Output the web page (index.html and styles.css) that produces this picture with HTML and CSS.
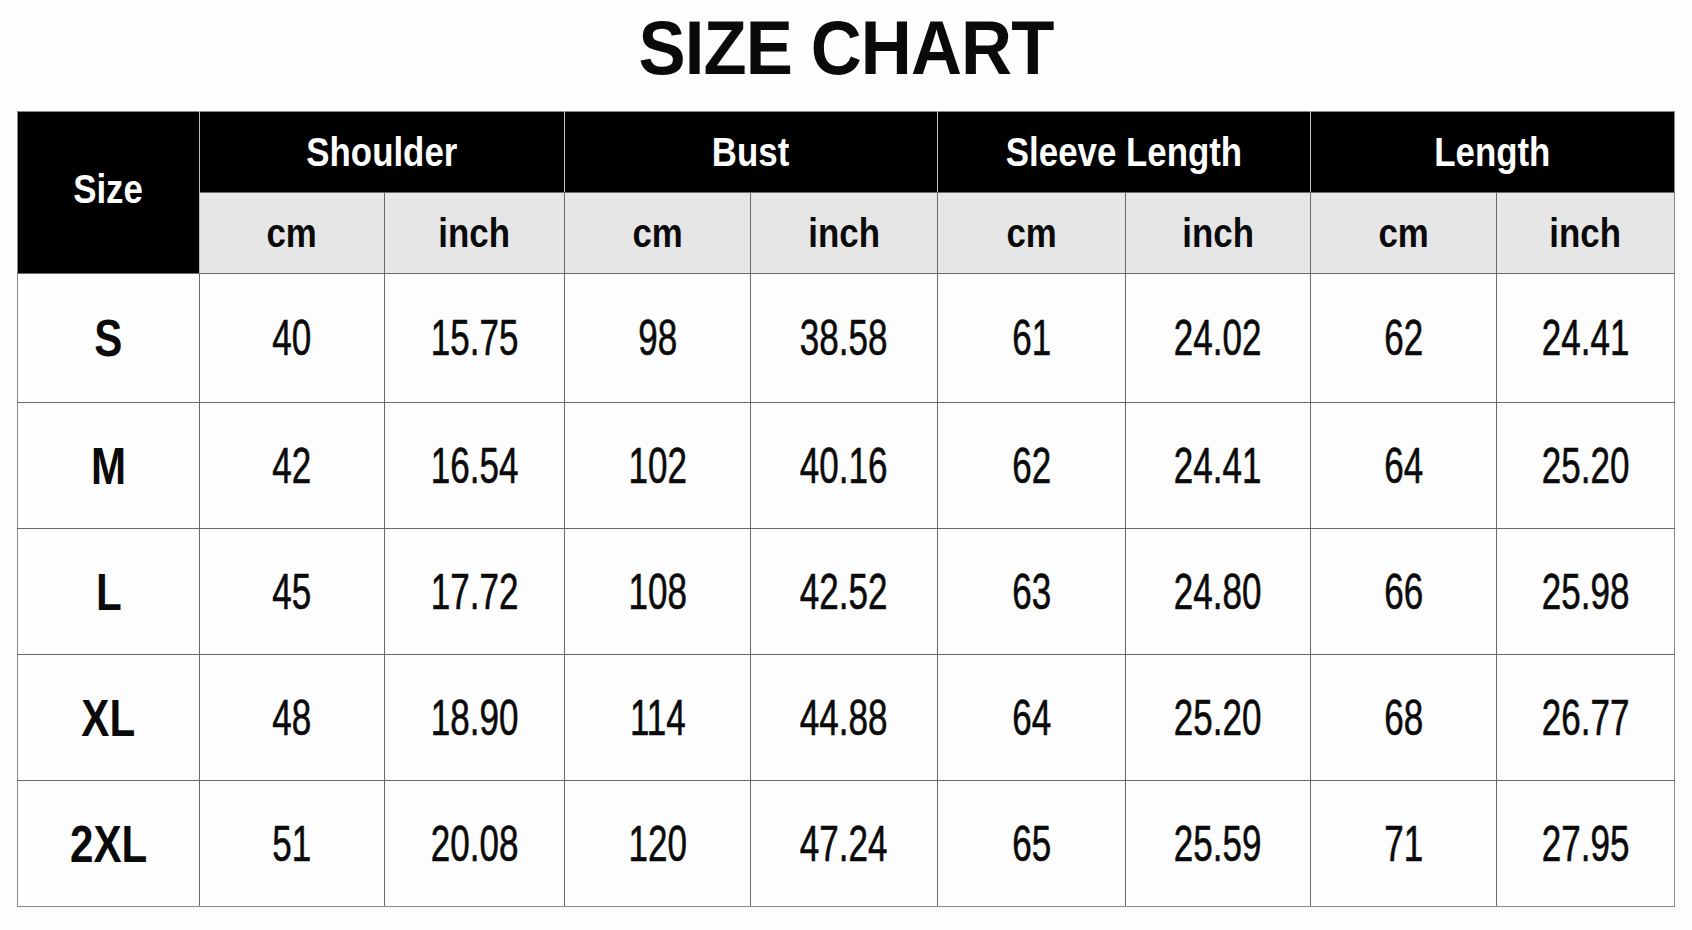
FILE: index.html
```html
<!DOCTYPE html>
<html lang="en">
<head>
<meta charset="utf-8">
<title>Size Chart</title>
<link rel="stylesheet" href="styles.css">
</head>
<body>
<div class="page">
  <h1 class="title"><span>SIZE CHART</span></h1>
  <table class="chart">
    <colgroup>
      <col class="c1"><col class="c2"><col class="c3"><col class="c4"><col class="c5">
      <col class="c6"><col class="c7"><col class="c8"><col class="c9">
    </colgroup>
    <thead>
      <tr class="h1">
        <th rowspan="2" class="size-h"><span>Size</span></th>
        <th colspan="2"><span>Shoulder</span></th>
        <th colspan="2"><span>Bust</span></th>
        <th colspan="2"><span>Sleeve Length</span></th>
        <th colspan="2"><span>Length</span></th>
      </tr>
      <tr class="h2">
        <th><span>cm</span></th><th><span>inch</span></th>
        <th><span>cm</span></th><th><span>inch</span></th>
        <th><span>cm</span></th><th><span>inch</span></th>
        <th><span>cm</span></th><th><span>inch</span></th>
      </tr>
    </thead>
    <tbody>
      <tr class="first"><th><span>S</span></th><td><span>40</span></td><td><span>15.75</span></td><td><span>98</span></td><td><span>38.58</span></td><td><span>61</span></td><td><span>24.02</span></td><td><span>62</span></td><td><span>24.41</span></td></tr>
      <tr><th><span>M</span></th><td><span>42</span></td><td><span>16.54</span></td><td><span>102</span></td><td><span>40.16</span></td><td><span>62</span></td><td><span>24.41</span></td><td><span>64</span></td><td><span>25.20</span></td></tr>
      <tr><th><span>L</span></th><td><span>45</span></td><td><span>17.72</span></td><td><span>108</span></td><td><span>42.52</span></td><td><span>63</span></td><td><span>24.80</span></td><td><span>66</span></td><td><span>25.98</span></td></tr>
      <tr><th><span>XL</span></th><td><span>48</span></td><td><span>18.90</span></td><td><span>114</span></td><td><span>44.88</span></td><td><span>64</span></td><td><span>25.20</span></td><td><span>68</span></td><td><span>26.77</span></td></tr>
      <tr><th><span>2XL</span></th><td><span>51</span></td><td><span>20.08</span></td><td><span>120</span></td><td><span>47.24</span></td><td><span>65</span></td><td><span>25.59</span></td><td><span>71</span></td><td><span>27.95</span></td></tr>
    </tbody>
  </table>
</div>
</body>
</html>
```

FILE: styles.css
```css
html, body {
  margin: 0;
  padding: 0;
  background: #fdfdfd;
}

.page {
  padding: 10px 0 0 17px;
}

.title {
  margin: 0 0 25px 0;
  height: 76px;
  width: 1657px;
  font-family: "Liberation Sans", Arial, sans-serif;
  font-weight: 700;
  font-size: 76px;
  line-height: 76px;
  text-align: center;
  color: #0a0a0a;
}

.title span {
  display: inline-block;
  transform: scaleX(0.93);
  letter-spacing: -1px;
}

.chart {
  width: 1657px;
  border-collapse: collapse;
  table-layout: fixed;
  font-family: "Liberation Sans", Arial, sans-serif;
  color: #0a0a0a;
}

.c1 { width: 182px; }
.c2 { width: 185px; }
.c3 { width: 180px; }
.c4 { width: 186px; }
.c5 { width: 187px; }
.c6 { width: 188px; }
.c7 { width: 185px; }
.c8 { width: 186px; }
.c9 { width: 178px; }

.chart th,
.chart td {
  padding: 0;
  text-align: center;
  vertical-align: middle;
  border: 1px solid #6a6a6a;
  line-height: 1;
  white-space: nowrap;
}

.chart th span,
.chart td span {
  display: inline-block;
}

.h1 th {
  height: 80px;
  background: #000;
  color: #fff;
  font-weight: 700;
  font-size: 41px;
  border-color: #bdbdbd;
  border-bottom-color: #6a6a6a;
}

.h1 .size-h {
  border-right-color: #bdbdbd;
  border-bottom-color: #6a6a6a;
  padding-bottom: 6px;
}

.h2 th {
  height: 80px;
  background: #e6e6e6;
  color: #0a0a0a;
  font-weight: 700;
  font-size: 41px;
}

thead th span {
  transform: scaleX(0.85);
}

.chart thead tr:first-child th {
  border-top-color: #888;
}

tbody th {
  height: 125px;
  font-weight: 700;
  font-size: 52px;
  background: #fdfdfd;
}

tbody th span {
  transform: scaleX(0.81);
}

tbody tr.first th,
tbody tr.first td {
  height: 128px;
}

tbody td {
  height: 125px;
  font-weight: 400;
  font-size: 50px;
  background: #fdfdfd;
}

tbody td span {
  transform: scaleX(0.7);
  -webkit-text-stroke: 0.6px #0a0a0a;
}

.chart tr > :first-child {
  border-left-color: #888;
}

.chart tr > :last-child {
  border-right-color: #888;
}

tbody tr:last-child th,
tbody tr:last-child td {
  border-bottom-color: #888;
}
```
